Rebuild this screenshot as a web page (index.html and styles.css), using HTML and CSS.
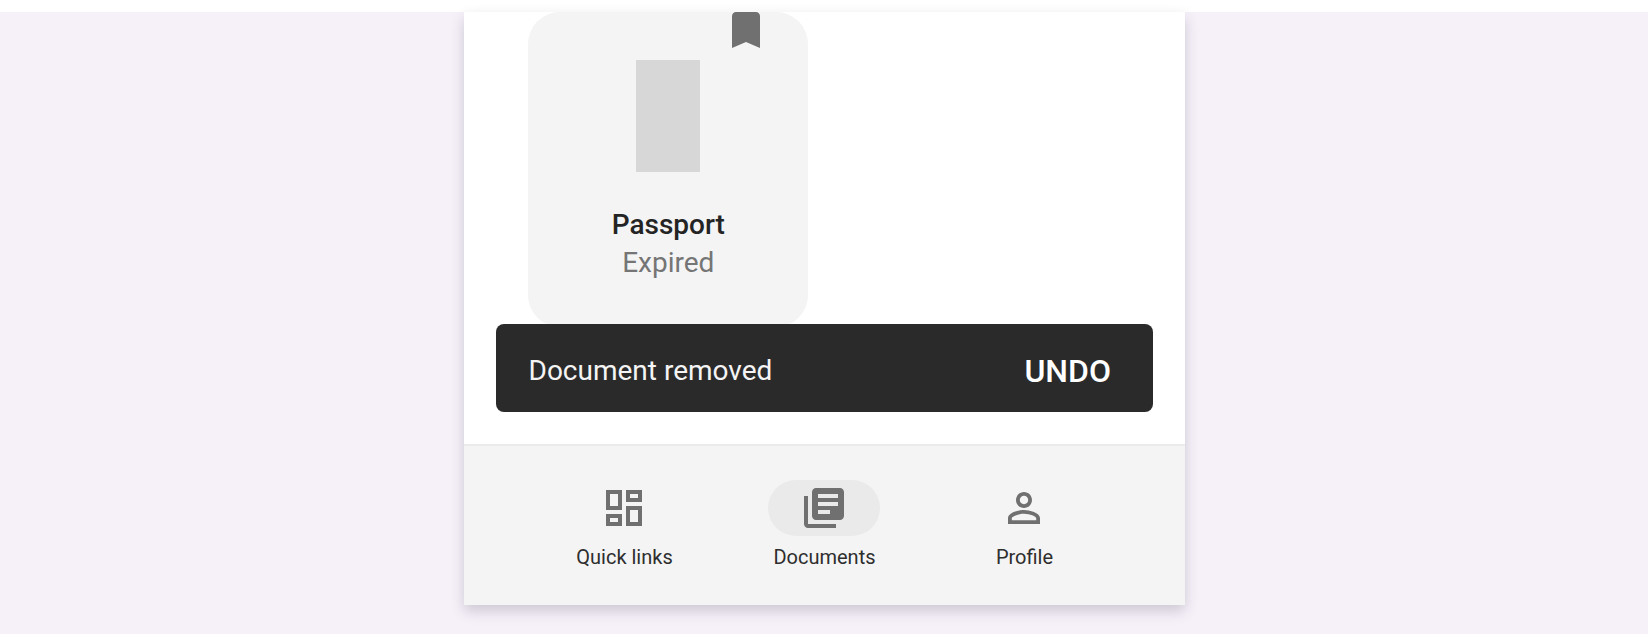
FILE: index.html
```html
<!DOCTYPE html>
<html lang="en">
<head>
<meta charset="utf-8">
<title>Documents</title>
<link rel="stylesheet" href="styles.css">
</head>
<body>
<main class="stage">
  <div class="phone">
    <section class="content">
      <article class="card">
        <svg class="bookmark" viewBox="0 0 24 24"><path d="M17 3H7c-1.100 0-2 .9-2 2v16l7-3 7 3V5c0-1.100-.9-2-2-2z"/></svg>
        <div class="thumb"></div>
        <h2 class="card-title">Passport</h2>
        <p class="card-status">Expired</p>
      </article>
      <div class="snackbar">
        <span class="message">Document removed</span>
        <button class="undo">UNDO</button>
      </div>
    </section>
    <nav class="nav">
      <a class="item">
        <span class="pill"><svg class="icon" viewBox="0 0 24 24"><path d="M19 5v2h-4V5h4M9 5v6H5V5h4m10 8v6h-4v-6h4M9 17v2H5v-2h4M21 3h-8v6h8V3zM11 3H3v10h8V3zm10 8h-8v10h8V11zm-10 4H3v6h8v-6z"/></svg></span>
        <span class="label">Quick links</span>
      </a>
      <a class="item">
        <span class="pill active"><svg class="icon" viewBox="0 0 24 24"><path fill-rule="evenodd" d="M8 2h12c1.100 0 2 .9 2 2v12c0 1.100-.9 2-2 2H8c-1.100 0-2-.9-2-2V4c0-1.100.9-2 2-2zM9 5v2h10V5zM9 9v2h10V9zM9 13v2h6v-2zM2 6h2v14h14v2H4c-1.100 0-2-.9-2-2z"/></svg></span>
        <span class="label">Documents</span>
      </a>
      <a class="item">
        <span class="pill"><svg class="icon" viewBox="0 0 24 24"><path d="M12 5.900c1.160 0 2.100.94 2.100 2.100s-.94 2.100-2.100 2.100S9.900 9.160 9.900 8s.94-2.100 2.100-2.100m0 9c2.970 0 6.100 1.460 6.100 2.100v1.100H5.900V17c0-.64 3.130-2.100 6.100-2.100M12 4C9.790 4 8 5.790 8 8s1.790 4 4 4 4-1.790 4-4-1.790-4-4-4zm0 9c-2.670 0-8 1.340-8 4v3h16v-3c0-2.660-5.330-4-8-4z"/></svg></span>
        <span class="label">Profile</span>
      </a>
    </nav>
  </div>
</main>
</body>
</html>
```
FILE: styles.css
```css
* { box-sizing: border-box; }
body {
  margin: 0;
  padding-top: 12px;
  background: #fff;
  font-family: Roboto, sans-serif;
  color: #242424;
}
.stage {
  height: 622px;
  padding-left: 464px;
  background: #f6f1f9;
}
.phone {
  display: flex;
  flex-direction: column;
  width: 721px;
  height: 593px;
  background: #fff;
  box-shadow: 0 6px 13px rgba(40, 35, 60, .2);
}
.content {
  display: flex;
  flex-direction: column;
  height: 432px;
  padding: 0 32px;
}
.card {
  position: relative;
  display: flex;
  flex: none;
  flex-direction: column;
  align-items: center;
  width: 280px;
  height: 315px;
  margin-bottom: -3px;
  margin-left: 32px;
  padding-top: 48px;
  border-radius: 32px;
  background: #f4f4f4;
}
.bookmark {
  position: absolute;
  top: -6px;
  right: 38px;
  width: 48px;
  height: 48px;
  fill: #707070;
}
.thumb {
  width: 64px;
  height: 112px;
  background: #d7d7d7;
}
.card-title,
.card-status {
  margin: 0;
  font-size: 28px;
  line-height: 38px;
}
.card-title { margin-top: 34px; padding-left: .5px; font-weight: 500; }
.card-status { padding-left: .5px; color: #757575; }
.snackbar {
  position: relative;
  display: flex;
  align-items: center;
  justify-content: space-between;
  flex: none;
  width: 656.500px;
  height: 88px;
  padding: 5px 41.500px 0 32.500px;
  border-radius: 8px;
  background: #2a2a2a;
  color: #fff;
}
.message { font-size: 28px; color: #f4f4f4; }
.undo {
  padding: 0;
  border: 0;
  background: none;
  color: #fff;
  font: 500 32px/38px Roboto, sans-serif;
}
.nav {
  display: flex;
  justify-content: center;
  height: 161px;
  padding-top: 34px;
  padding-right: 1px;
  border-top: 2px solid #ebebeb;
  background: #f4f4f4;
}
.item {
  display: flex;
  flex-direction: column;
  align-items: center;
  width: 200px;
}
.pill {
  display: grid;
  place-items: center;
  width: 112px;
  height: 56px;
  border-radius: 28px;
}
.active { background: #eaeaea; }
.icon { width: 48px; height: 48px; fill: #707070; }
.label {
  margin-top: 9px;
  padding-left: 1px;
  font-size: 20px;
  line-height: 24px;
  color: #2e2e2e;
}
```
